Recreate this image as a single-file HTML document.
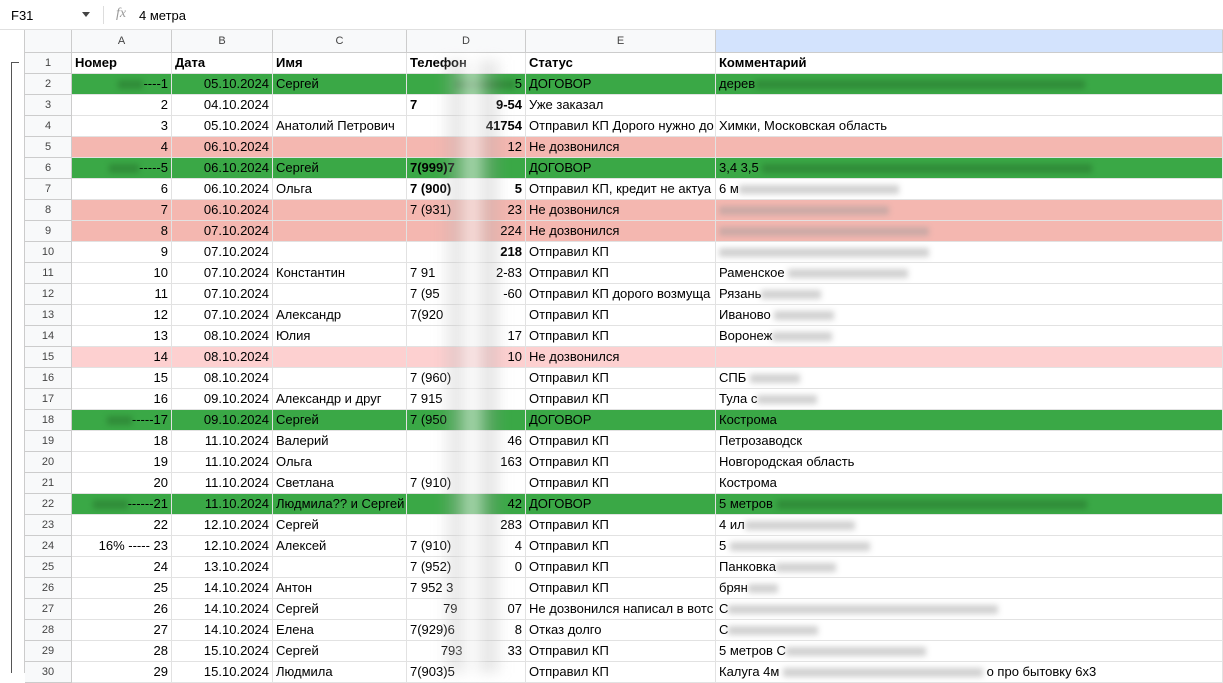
<!DOCTYPE html>
<html><head><meta charset="utf-8"><style>
*{margin:0;padding:0;box-sizing:border-box}
body{width:1223px;height:673px;overflow:hidden;background:#fff;font-family:"Liberation Sans",Arial,sans-serif;font-size:13px;color:#000;position:relative}
.fb{position:absolute;left:0;top:0;width:1223px;height:30px;border-bottom:1px solid #e0e0e0;background:#fff}
.fb .ref{position:absolute;left:11px;top:8px;font-size:13px}
.fb .dd{position:absolute;left:82px;top:12px;width:0;height:0;border-left:4px solid transparent;border-right:4px solid transparent;border-top:5px solid #444}
.fb .sep{position:absolute;left:103px;top:6px;width:1px;height:18px;background:#ddd}
.fb .fx{position:absolute;left:116px;top:6px;font-family:"Liberation Serif",serif;font-style:italic;color:#999;font-size:14px}
.fb .v{position:absolute;left:139px;top:8px}
.gut{position:absolute;left:0;top:30px;width:25px;height:643px;background:#fff;border-right:1px solid #ccc}
.gl{position:absolute;left:11px;top:62px;width:1px;height:611px;background:#555}
.gl2{position:absolute;left:11px;top:62px;width:8px;height:1px;background:#555}
.hdr{position:absolute;top:30px;height:23px;background:#f8f9fa;border-right:1px solid #ccc;border-bottom:1px solid #ccc;text-align:center;font-size:11px;color:#444;line-height:22px}
.row{position:absolute;left:25px;height:21px;width:1198px}
.c{position:absolute;top:0;height:21px;line-height:20px;border-right:1px solid #e2e2e2;border-bottom:1px solid #e2e2e2;white-space:nowrap;overflow:hidden;padding:0 3px}
.n{left:0;width:47px;background:#f8f9fa;text-align:center;font-size:11px;color:#444;border-right:1px solid #ccc;border-bottom:1px solid #ccc}
.a{left:47px;width:100px;text-align:right}
.b{left:147px;width:101px;text-align:right}
.cc{left:248px;width:134px}
.d{left:382px;width:119px;text-align:right;overflow:visible}
.e{left:501px;width:190px}
.f{left:691px;width:507px}
.g{background:#3aa846}
.p{background:#f4b7b0}
.lp{background:#fdd0d0}
.bl{display:inline-block;height:9px;background:#999;filter:blur(3px);opacity:.45;vertical-align:middle}
.g .bl{background:#2a7a30;opacity:.6}
.smear{position:absolute;left:440px;top:60px;width:65px;height:613px;background:linear-gradient(90deg,rgba(255,255,255,0),rgba(180,180,180,.35),rgba(255,255,255,.6),rgba(160,160,160,.3),rgba(255,255,255,0));filter:blur(6px)}
b{font-weight:bold}
</style></head><body>
<div class="fb"><span class="ref">F31</span><span class="dd"></span><span class="sep"></span><span class="fx">fx</span><span class="v">4 метра</span></div>
<div class="gut"></div><div class="gl"></div><div class="gl2"></div>
<div class="hdr" style="left:25px;width:47px"></div>
<div class="hdr" style="left:72px;width:100px">A</div>
<div class="hdr" style="left:172px;width:101px">B</div>
<div class="hdr" style="left:273px;width:134px">C</div>
<div class="hdr" style="left:407px;width:119px">D</div>
<div class="hdr" style="left:526px;width:190px">E</div>
<div class="hdr" style="left:716px;width:507px;background:#d3e3fd"></div>

<div class="row" style="top:53px"><div class="c n">1</div><div class="c a" style="text-align:left"><b>Номер</b></div><div class="c b" style="text-align:left"><b>Дата</b></div><div class="c cc"><b>Имя</b></div><div class="c d" style="text-align:left"><b>Телефон</b></div><div class="c e"><b>Статус</b></div><div class="c f"><b>Комментарий</b></div></div>

<div class="row g" style="top:74px"><div class="c n">2</div><div class="c a"><span class="bl" style="width:25px"></span>----1</div><div class="c b">05.10.2024</div><div class="c cc">Сергей</div><div class="c d"><span class="bl" style="width:60px"></span>5</div><div class="c e">ДОГОВОР</div><div class="c f">дерев<span class="bl" style="width:330px"></span></div></div>
<div class="row" style="top:95px"><div class="c n">3</div><div class="c a">2</div><div class="c b">04.10.2024</div><div class="c cc"></div><div class="c d" style="text-align:left"><b>7</b><span style="float:right"><b>9-54</b></span></div><div class="c e">Уже заказал</div><div class="c f"></div></div>
<div class="row" style="top:116px"><div class="c n">4</div><div class="c a">3</div><div class="c b">05.10.2024</div><div class="c cc">Анатолий Петрович</div><div class="c d"><b>41754</b></div><div class="c e">Отправил КП Дорого нужно до</div><div class="c f">Химки, Московская область</div></div>
<div class="row p" style="top:137px"><div class="c n">5</div><div class="c a">4</div><div class="c b">06.10.2024</div><div class="c cc"></div><div class="c d">12</div><div class="c e">Не дозвонился</div><div class="c f"></div></div>
<div class="row g" style="top:158px"><div class="c n">6</div><div class="c a"><span class="bl" style="width:30px"></span>-----5</div><div class="c b">06.10.2024</div><div class="c cc">Сергей</div><div class="c d" style="text-align:left"><b>7(999)7</b></div><div class="c e">ДОГОВОР</div><div class="c f">3,4 3,5 <span class="bl" style="width:330px"></span></div></div>
<div class="row" style="top:179px"><div class="c n">7</div><div class="c a">6</div><div class="c b">06.10.2024</div><div class="c cc">Ольга</div><div class="c d" style="text-align:left"><b>7 (900)</b><span style="float:right"><b>5</b></span></div><div class="c e">Отправил КП, кредит не актуа</div><div class="c f">6 м<span class="bl" style="width:160px"></span></div></div>
<div class="row p" style="top:200px"><div class="c n">8</div><div class="c a">7</div><div class="c b">06.10.2024</div><div class="c cc"></div><div class="c d" style="text-align:left">7 (931)<span style="float:right">23</span></div><div class="c e">Не дозвонился</div><div class="c f"><span class="bl" style="width:170px"></span></div></div>
<div class="row p" style="top:221px"><div class="c n">9</div><div class="c a">8</div><div class="c b">07.10.2024</div><div class="c cc"></div><div class="c d">224</div><div class="c e">Не дозвонился</div><div class="c f"><span class="bl" style="width:210px"></span></div></div>
<div class="row" style="top:242px"><div class="c n">10</div><div class="c a">9</div><div class="c b">07.10.2024</div><div class="c cc"></div><div class="c d"><b>218</b></div><div class="c e">Отправил КП</div><div class="c f"><span class="bl" style="width:210px"></span></div></div>
<div class="row" style="top:263px"><div class="c n">11</div><div class="c a">10</div><div class="c b">07.10.2024</div><div class="c cc">Константин</div><div class="c d" style="text-align:left">7 91<span style="float:right">2-83</span></div><div class="c e">Отправил КП</div><div class="c f">Раменское <span class="bl" style="width:120px"></span></div></div>
<div class="row" style="top:284px"><div class="c n">12</div><div class="c a">11</div><div class="c b">07.10.2024</div><div class="c cc"></div><div class="c d" style="text-align:left">7 (95<span style="float:right">-60</span></div><div class="c e">Отправил КП дорого возмуща</div><div class="c f">Рязань<span class="bl" style="width:60px"></span></div></div>
<div class="row" style="top:305px"><div class="c n">13</div><div class="c a">12</div><div class="c b">07.10.2024</div><div class="c cc">Александр</div><div class="c d" style="text-align:left">7(920</div><div class="c e">Отправил КП</div><div class="c f">Иваново <span class="bl" style="width:60px"></span></div></div>
<div class="row" style="top:326px"><div class="c n">14</div><div class="c a">13</div><div class="c b">08.10.2024</div><div class="c cc">Юлия</div><div class="c d">17</div><div class="c e">Отправил КП</div><div class="c f">Воронеж<span class="bl" style="width:60px"></span></div></div>
<div class="row lp" style="top:347px"><div class="c n">15</div><div class="c a">14</div><div class="c b">08.10.2024</div><div class="c cc"></div><div class="c d">10</div><div class="c e">Не дозвонился</div><div class="c f"></div></div>
<div class="row" style="top:368px"><div class="c n">16</div><div class="c a">15</div><div class="c b">08.10.2024</div><div class="c cc"></div><div class="c d" style="text-align:left">7 (960)</div><div class="c e">Отправил КП</div><div class="c f">СПБ <span class="bl" style="width:50px"></span></div></div>
<div class="row" style="top:389px"><div class="c n">17</div><div class="c a">16</div><div class="c b">09.10.2024</div><div class="c cc">Александр и друг</div><div class="c d" style="text-align:left">7 915</div><div class="c e">Отправил КП</div><div class="c f">Тула с<span class="bl" style="width:60px"></span></div></div>
<div class="row g" style="top:410px"><div class="c n">18</div><div class="c a"><span class="bl" style="width:25px"></span>-----17</div><div class="c b">09.10.2024</div><div class="c cc">Сергей</div><div class="c d" style="text-align:left">7 (950</div><div class="c e">ДОГОВОР</div><div class="c f">Кострома</div></div>
<div class="row" style="top:431px"><div class="c n">19</div><div class="c a">18</div><div class="c b">11.10.2024</div><div class="c cc">Валерий</div><div class="c d">46</div><div class="c e">Отправил КП</div><div class="c f">Петрозаводск</div></div>
<div class="row" style="top:452px"><div class="c n">20</div><div class="c a">19</div><div class="c b">11.10.2024</div><div class="c cc">Ольга</div><div class="c d">163</div><div class="c e">Отправил КП</div><div class="c f">Новгородская область</div></div>
<div class="row" style="top:473px"><div class="c n">21</div><div class="c a">20</div><div class="c b">11.10.2024</div><div class="c cc">Светлана</div><div class="c d" style="text-align:left">7 (910)</div><div class="c e">Отправил КП</div><div class="c f">Кострома</div></div>
<div class="row g" style="top:494px"><div class="c n">22</div><div class="c a"><span class="bl" style="width:35px"></span>------21</div><div class="c b">11.10.2024</div><div class="c cc">Людмила?? и Сергей</div><div class="c d">42</div><div class="c e">ДОГОВОР</div><div class="c f">5 метров <span class="bl" style="width:310px"></span></div></div>
<div class="row" style="top:515px"><div class="c n">23</div><div class="c a">22</div><div class="c b">12.10.2024</div><div class="c cc">Сергей</div><div class="c d">283</div><div class="c e">Отправил КП</div><div class="c f">4 ил<span class="bl" style="width:110px"></span></div></div>
<div class="row" style="top:536px"><div class="c n">24</div><div class="c a">16% ----- 23</div><div class="c b">12.10.2024</div><div class="c cc">Алексей</div><div class="c d" style="text-align:left">7 (910)<span style="float:right">4</span></div><div class="c e">Отправил КП</div><div class="c f">5 <span class="bl" style="width:140px"></span></div></div>
<div class="row" style="top:557px"><div class="c n">25</div><div class="c a">24</div><div class="c b">13.10.2024</div><div class="c cc"></div><div class="c d" style="text-align:left">7 (952)<span style="float:right">0</span></div><div class="c e">Отправил КП</div><div class="c f">Панковка<span class="bl" style="width:60px"></span></div></div>
<div class="row" style="top:578px"><div class="c n">26</div><div class="c a">25</div><div class="c b">14.10.2024</div><div class="c cc">Антон</div><div class="c d" style="text-align:left">7 952 3</div><div class="c e">Отправил КП</div><div class="c f">брян<span class="bl" style="width:30px"></span></div></div>
<div class="row" style="top:599px"><div class="c n">27</div><div class="c a">26</div><div class="c b">14.10.2024</div><div class="c cc">Сергей</div><div class="c d">79<span style="display:inline-block;width:50px"></span>07</div><div class="c e">Не дозвонился написал в вотс</div><div class="c f">С<span class="bl" style="width:270px"></span></div></div>
<div class="row" style="top:620px"><div class="c n">28</div><div class="c a">27</div><div class="c b">14.10.2024</div><div class="c cc">Елена</div><div class="c d" style="text-align:left">7(929)6<span style="float:right">8</span></div><div class="c e">Отказ долго</div><div class="c f">С<span class="bl" style="width:90px"></span></div></div>
<div class="row" style="top:641px"><div class="c n">29</div><div class="c a">28</div><div class="c b">15.10.2024</div><div class="c cc">Сергей</div><div class="c d">793<span style="display:inline-block;width:45px"></span>33</div><div class="c e">Отправил КП</div><div class="c f">5 метров С<span class="bl" style="width:140px"></span></div></div>
<div class="row" style="top:662px"><div class="c n">30</div><div class="c a">29</div><div class="c b">15.10.2024</div><div class="c cc">Людмила</div><div class="c d" style="text-align:left">7(903)5</div><div class="c e">Отправил КП</div><div class="c f">Калуга 4м <span class="bl" style="width:200px"></span> о про бытовку 6х3</div></div>
<div class="smear"></div>
</body></html>
